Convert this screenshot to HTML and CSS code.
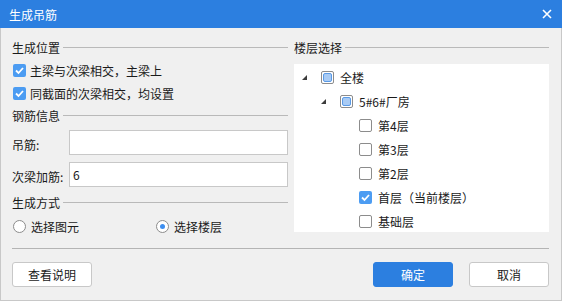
FILE: index.html
```html
<!DOCTYPE html>
<html lang="zh-CN">
<head>
  <meta charset="UTF-8">
  <meta name="viewport" content="width=device-width, initial-scale=1.0">
  <title>生成吊筋</title>
  <link rel="stylesheet" href="styles.css">
</head>
<body>
  <div class="dialog">
    <div class="titlebar">
      <span class="title">生成吊筋</span>
      <svg class="close" width="10" height="10" viewBox="0 0 10 10">
        <path d="M1 1 L9 9 M9 1 L1 9" stroke="#fff" stroke-width="1.6" fill="none"/>
      </svg>
    </div>
    <div class="body">
      <div class="main">
        <div class="left">
          <div class="group-title"><span>生成位置</span><i class="rule"></i></div>
          <label class="check-row first">
            <span class="box checked"><svg width="13" height="13" viewBox="0 0 13 13"><path d="M3 6.5 L5.5 9 L10 4" stroke="#fff" stroke-width="1.8" fill="none"/></svg></span>
            主梁与次梁相交，主梁上
          </label>
          <label class="check-row">
            <span class="box checked"><svg width="13" height="13" viewBox="0 0 13 13"><path d="M3 6.5 L5.5 9 L10 4" stroke="#fff" stroke-width="1.8" fill="none"/></svg></span>
            同截面的次梁相交，均设置
          </label>

          <div class="group-title second"><span>钢筋信息</span><i class="rule"></i></div>
          <div class="field first">
            <label class="field-label" for="diaojin">吊筋:</label>
            <input type="text" id="diaojin" value="">
          </div>
          <div class="field">
            <label class="field-label" for="jiajin">次梁加筋:</label>
            <input type="text" id="jiajin" value="6">
          </div>

          <div class="group-title third"><span>生成方式</span><i class="rule"></i></div>
          <div class="radio-row">
            <label class="radio-option wide"><span class="radio"></span>选择图元</label>
            <label class="radio-option"><span class="radio on"></span>选择楼层</label>
          </div>
        </div>

        <div class="right">
          <div class="group-title"><span>楼层选择</span><i class="rule"></i></div>
          <div class="tree">
            <div class="tree-row level0">
              <span class="arrow"><i></i></span>
              <span class="box partial"><i></i></span>
              <span>全楼</span>
            </div>
            <div class="tree-row level1">
              <span class="arrow"><i></i></span>
              <span class="box partial"><i></i></span>
              <span>5#6#厂房</span>
            </div>
            <div class="tree-row level2">
              <span class="box"></span>
              <span>第4层</span>
            </div>
            <div class="tree-row level2">
              <span class="box"></span>
              <span>第3层</span>
            </div>
            <div class="tree-row level2">
              <span class="box"></span>
              <span>第2层</span>
            </div>
            <div class="tree-row level2">
              <span class="box checked"><svg width="13" height="13" viewBox="0 0 13 13"><path d="M3 6.5 L5.5 9 L10 4" stroke="#fff" stroke-width="1.8" fill="none"/></svg></span>
              <span>首层（当前楼层）</span>
            </div>
            <div class="tree-row level2">
              <span class="box"></span>
              <span>基础层</span>
            </div>
          </div>
        </div>
      </div>

      <div class="separator"></div>

      <div class="footer">
        <button class="btn">查看说明</button>
        <button class="btn primary">确定</button>
        <button class="btn">取消</button>
      </div>
    </div>
  </div>
</body>
</html>
```

FILE: styles.css
```css
body {
  margin: 0;
  padding: 0;
  font-family: "Noto Sans CJK SC", "Noto Sans", sans-serif;
  font-size: 12px;
  color: #1a1a1a;
  background: #f0f0f0;
}

.dialog {
  width: 562px;
  height: 301px;
}

.titlebar {
  height: 28px;
  background: #2c7fe0;
  display: flex;
  align-items: center;
  padding: 0 10px 0 9px;
}

.title {
  color: #fff;
  font-size: 12px;
  flex: 1;
}

.close {
  display: block;
}

.body {
  box-sizing: border-box;
  height: 273px;
  border: 1px solid #c8c8c8;
  border-top: none;
  background: #f0f0f0;
  padding: 11px 12px 0 11px;
}

.main {
  display: flex;
  gap: 6px;
}

.left {
  width: 276px;
}

.right {
  width: 255px;
}

.group-title {
  height: 17px;
  line-height: 17px;
  display: flex;
  align-items: center;
}

.group-title.second {
  margin-top: 2px;
}

.group-title.third {
  margin-top: 7px;
}

.rule {
  flex: 1;
  height: 1px;
  background: #b9b9b9;
  margin-left: 3px;
}

.check-row {
  height: 23px;
  display: flex;
  align-items: center;
  padding-left: 1px;
}

.check-row.first {
  margin-top: 3px;
}

.check-row .box {
  margin-right: 4px;
}

.box {
  box-sizing: border-box;
  width: 13px;
  height: 13px;
  border: 1px solid #8c8c8c;
  border-radius: 2px;
  background: #fff;
  position: relative;
  flex-shrink: 0;
}

.box.checked {
  border: none;
  background: #4c9cf2;
}

.box svg {
  display: block;
}

.box.partial i {
  position: absolute;
  left: 1px;
  top: 1px;
  box-sizing: border-box;
  width: 9px;
  height: 9px;
  border: 1px solid #5a9ae6;
  border-radius: 2px;
  background: #a9cbf4;
}

.field {
  display: flex;
  align-items: center;
  margin-top: 7px;
}

.field.first {
  margin-top: 6px;
}

.field-label {
  width: 57px;
  padding-top: 3px;
}

.field input {
  box-sizing: border-box;
  width: 219px;
  height: 25px;
  border: 1px solid #c8c8c8;
  background: #fff;
  padding: 0 3px;
  margin: 0;
  font-family: "Noto Sans CJK SC", "Noto Sans", sans-serif;
  font-size: 12px;
  color: #1a1a1a;
  outline: none;
}

.radio-row {
  display: flex;
  height: 22px;
  margin-top: 4px;
}

.radio-option {
  display: flex;
  align-items: center;
  padding-left: 1px;
}

.radio-option.wide {
  width: 142px;
}

.radio {
  box-sizing: border-box;
  width: 13px;
  height: 13px;
  border: 1px solid #8c8c8c;
  border-radius: 50%;
  background: #fff;
  margin-right: 5px;
  display: flex;
  align-items: center;
  justify-content: center;
}

.radio.on::after {
  content: "";
  width: 5px;
  height: 5px;
  border-radius: 50%;
  background: #3d8ef0;
}

.tree {
  box-sizing: border-box;
  margin-top: 8px;
  height: 168px;
  padding-top: 1px;
  background: #fff;
  overflow: hidden;
}

.tree-row {
  height: 24px;
  display: flex;
  align-items: center;
}

.tree-row .box {
  margin-right: 6px;
}

.level0 {
  padding-left: 6px;
}

.level1 {
  padding-left: 25px;
}

.level2 {
  padding-left: 65px;
}

.arrow {
  width: 21px;
  display: flex;
  align-items: center;
}

.arrow i {
  width: 0;
  height: 0;
  margin-left: 2px;
  border-left: 5px solid transparent;
  border-bottom: 5px solid #3c3c3c;
}

.separator {
  height: 1px;
  background: #b4b4b4;
  margin-top: 11px;
}

.footer {
  display: flex;
  margin-top: 13px;
}

.btn {
  box-sizing: border-box;
  width: 80px;
  height: 25px;
  border: 1px solid #c8c8c8;
  border-radius: 3px;
  background: #fff;
  font-family: "Noto Sans CJK SC", "Noto Sans", sans-serif;
  font-size: 12px;
  color: #1a1a1a;
  padding: 0;
}

.btn.primary {
  margin-left: auto;
  margin-right: 16px;
  background: #2c7fe0;
  border-color: #2c7fe0;
  color: #fff;
}
```
